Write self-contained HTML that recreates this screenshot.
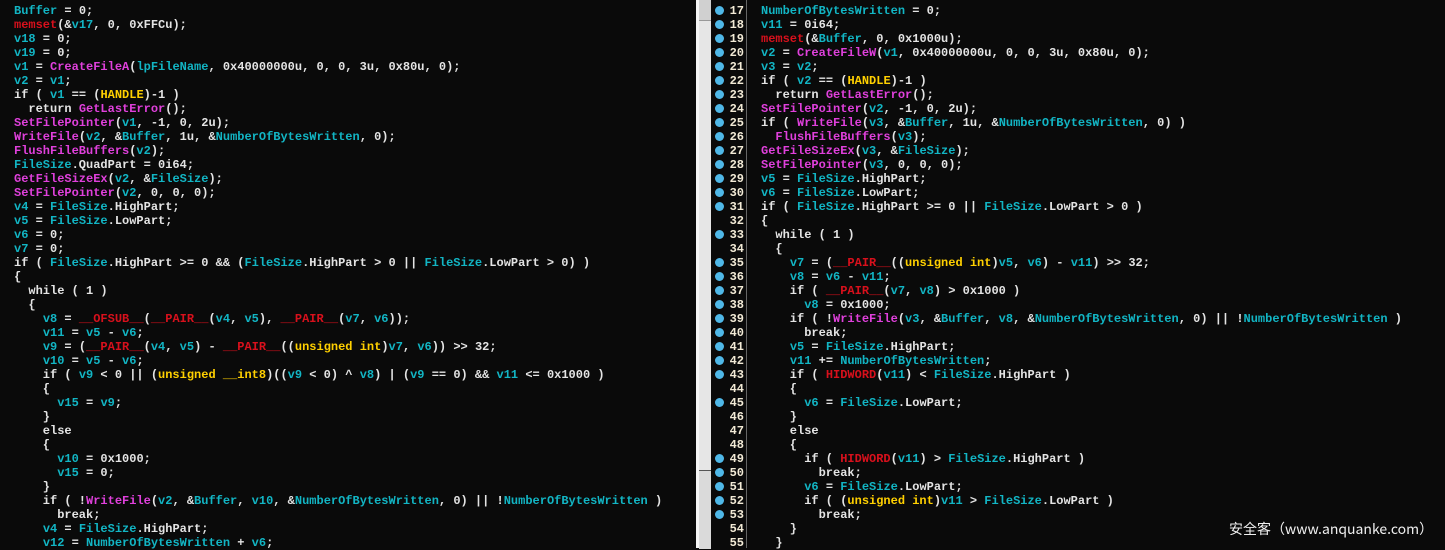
<!DOCTYPE html><html><head><meta charset="utf-8"><style>
body{margin:0;width:1445px;height:548px;background:#0a0a0a;overflow:hidden;position:relative}
pre{margin:0;position:absolute;font:bold 12px/14px "Liberation Mono",monospace;color:#e4e4e4;white-space:pre}
.c{color:#12b5c4}.m{color:#e040dc}.r{color:#d8101c}.y{color:#ffd000}
#L{left:14px;top:4px}#R{left:761px;top:4px}
#sb{position:absolute;left:696px;top:0;width:15px;height:548px;background:#e6e6e6;border-left:3px solid #f4f4f4;box-sizing:border-box}
#th{position:absolute;left:699px;top:0;width:12px;height:20px;background:#d0d0d0;border-bottom:1px solid #999}
#th2{position:absolute;left:699px;top:470px;width:12px;height:78px;background:#dadada;border-top:1px solid #555}
#g{position:absolute;left:711px;top:0;width:35px;height:548px;background:#0a0a0a;border-right:1px solid #666}
#n{left:726px;top:4px;color:#f2ead6;text-align:right;width:18px}
.d{position:absolute;left:715px;width:9px;height:9px;border-radius:50%;background:#4fb8e8}
#wm{position:absolute;left:1229px;top:519px;color:#f0f0f0;font:14px "Noto Sans CJK SC",sans-serif;white-space:pre}
</style></head><body>
<pre id="L"><span class="c">Buffer</span> = 0;
<span class="r">memset</span>(&amp;<span class="c">v17</span>, 0, 0xFFCu);
<span class="c">v18</span> = 0;
<span class="c">v19</span> = 0;
<span class="c">v1</span> = <span class="m">CreateFileA</span>(<span class="c">lpFileName</span>, 0x40000000u, 0, 0, 3u, 0x80u, 0);
<span class="c">v2</span> = <span class="c">v1</span>;
if ( <span class="c">v1</span> == (<span class="y">HANDLE</span>)-1 )
  return <span class="m">GetLastError</span>();
<span class="m">SetFilePointer</span>(<span class="c">v1</span>, -1, 0, 2u);
<span class="m">WriteFile</span>(<span class="c">v2</span>, &amp;<span class="c">Buffer</span>, 1u, &amp;<span class="c">NumberOfBytesWritten</span>, 0);
<span class="m">FlushFileBuffers</span>(<span class="c">v2</span>);
<span class="c">FileSize</span>.QuadPart = 0i64;
<span class="m">GetFileSizeEx</span>(<span class="c">v2</span>, &amp;<span class="c">FileSize</span>);
<span class="m">SetFilePointer</span>(<span class="c">v2</span>, 0, 0, 0);
<span class="c">v4</span> = <span class="c">FileSize</span>.HighPart;
<span class="c">v5</span> = <span class="c">FileSize</span>.LowPart;
<span class="c">v6</span> = 0;
<span class="c">v7</span> = 0;
if ( <span class="c">FileSize</span>.HighPart &gt;= 0 &amp;&amp; (<span class="c">FileSize</span>.HighPart &gt; 0 || <span class="c">FileSize</span>.LowPart &gt; 0) )
{
  while ( 1 )
  {
    <span class="c">v8</span> = <span class="r">__OFSUB__</span>(<span class="r">__PAIR__</span>(<span class="c">v4</span>, <span class="c">v5</span>), <span class="r">__PAIR__</span>(<span class="c">v7</span>, <span class="c">v6</span>));
    <span class="c">v11</span> = <span class="c">v5</span> - <span class="c">v6</span>;
    <span class="c">v9</span> = (<span class="r">__PAIR__</span>(<span class="c">v4</span>, <span class="c">v5</span>) - <span class="r">__PAIR__</span>((<span class="y">unsigned int</span>)<span class="c">v7</span>, <span class="c">v6</span>)) &gt;&gt; 32;
    <span class="c">v10</span> = <span class="c">v5</span> - <span class="c">v6</span>;
    if ( <span class="c">v9</span> &lt; 0 || (<span class="y">unsigned __int8</span>)((<span class="c">v9</span> &lt; 0) ^ <span class="c">v8</span>) | (<span class="c">v9</span> == 0) &amp;&amp; <span class="c">v11</span> &lt;= 0x1000 )
    {
      <span class="c">v15</span> = <span class="c">v9</span>;
    }
    else
    {
      <span class="c">v10</span> = 0x1000;
      <span class="c">v15</span> = 0;
    }
    if ( !<span class="m">WriteFile</span>(<span class="c">v2</span>, &amp;<span class="c">Buffer</span>, <span class="c">v10</span>, &amp;<span class="c">NumberOfBytesWritten</span>, 0) || !<span class="c">NumberOfBytesWritten</span> )
      break;
    <span class="c">v4</span> = <span class="c">FileSize</span>.HighPart;
    <span class="c">v12</span> = <span class="c">NumberOfBytesWritten</span> + <span class="c">v6</span>;</pre>
<div id="sb"></div><div id="th"></div><div id="th2"></div><div id="g"></div>
<pre id="n">17
18
19
20
21
22
23
24
25
26
27
28
29
30
31
32
33
34
35
36
37
38
39
40
41
42
43
44
45
46
47
48
49
50
51
52
53
54
55</pre>
<div class="d" style="top:6px"></div><div class="d" style="top:20px"></div><div class="d" style="top:34px"></div><div class="d" style="top:48px"></div><div class="d" style="top:62px"></div><div class="d" style="top:76px"></div><div class="d" style="top:90px"></div><div class="d" style="top:104px"></div><div class="d" style="top:118px"></div><div class="d" style="top:132px"></div><div class="d" style="top:146px"></div><div class="d" style="top:160px"></div><div class="d" style="top:174px"></div><div class="d" style="top:188px"></div><div class="d" style="top:202px"></div>
<div class="d" style="top:230px"></div>
<div class="d" style="top:258px"></div><div class="d" style="top:272px"></div><div class="d" style="top:286px"></div><div class="d" style="top:300px"></div><div class="d" style="top:314px"></div><div class="d" style="top:328px"></div><div class="d" style="top:342px"></div><div class="d" style="top:356px"></div><div class="d" style="top:370px"></div>
<div class="d" style="top:398px"></div>
<div class="d" style="top:454px"></div><div class="d" style="top:468px"></div><div class="d" style="top:482px"></div><div class="d" style="top:496px"></div><div class="d" style="top:510px"></div>
<pre id="R"><span class="c">NumberOfBytesWritten</span> = 0;
<span class="c">v11</span> = 0i64;
<span class="r">memset</span>(&amp;<span class="c">Buffer</span>, 0, 0x1000u);
<span class="c">v2</span> = <span class="m">CreateFileW</span>(<span class="c">v1</span>, 0x40000000u, 0, 0, 3u, 0x80u, 0);
<span class="c">v3</span> = <span class="c">v2</span>;
if ( <span class="c">v2</span> == (<span class="y">HANDLE</span>)-1 )
  return <span class="m">GetLastError</span>();
<span class="m">SetFilePointer</span>(<span class="c">v2</span>, -1, 0, 2u);
if ( <span class="m">WriteFile</span>(<span class="c">v3</span>, &amp;<span class="c">Buffer</span>, 1u, &amp;<span class="c">NumberOfBytesWritten</span>, 0) )
  <span class="m">FlushFileBuffers</span>(<span class="c">v3</span>);
<span class="m">GetFileSizeEx</span>(<span class="c">v3</span>, &amp;<span class="c">FileSize</span>);
<span class="m">SetFilePointer</span>(<span class="c">v3</span>, 0, 0, 0);
<span class="c">v5</span> = <span class="c">FileSize</span>.HighPart;
<span class="c">v6</span> = <span class="c">FileSize</span>.LowPart;
if ( <span class="c">FileSize</span>.HighPart &gt;= 0 || <span class="c">FileSize</span>.LowPart &gt; 0 )
{
  while ( 1 )
  {
    <span class="c">v7</span> = (<span class="r">__PAIR__</span>((<span class="y">unsigned int</span>)<span class="c">v5</span>, <span class="c">v6</span>) - <span class="c">v11</span>) &gt;&gt; 32;
    <span class="c">v8</span> = <span class="c">v6</span> - <span class="c">v11</span>;
    if ( <span class="r">__PAIR__</span>(<span class="c">v7</span>, <span class="c">v8</span>) &gt; 0x1000 )
      <span class="c">v8</span> = 0x1000;
    if ( !<span class="m">WriteFile</span>(<span class="c">v3</span>, &amp;<span class="c">Buffer</span>, <span class="c">v8</span>, &amp;<span class="c">NumberOfBytesWritten</span>, 0) || !<span class="c">NumberOfBytesWritten</span> )
      break;
    <span class="c">v5</span> = <span class="c">FileSize</span>.HighPart;
    <span class="c">v11</span> += <span class="c">NumberOfBytesWritten</span>;
    if ( <span class="r">HIDWORD</span>(<span class="c">v11</span>) &lt; <span class="c">FileSize</span>.HighPart )
    {
      <span class="c">v6</span> = <span class="c">FileSize</span>.LowPart;
    }
    else
    {
      if ( <span class="r">HIDWORD</span>(<span class="c">v11</span>) &gt; <span class="c">FileSize</span>.HighPart )
        break;
      <span class="c">v6</span> = <span class="c">FileSize</span>.LowPart;
      if ( (<span class="y">unsigned int</span>)<span class="c">v11</span> &gt; <span class="c">FileSize</span>.LowPart )
        break;
    }
  }</pre>
<div id="wm">安全客（www.anquanke.com）</div>
</body></html>
